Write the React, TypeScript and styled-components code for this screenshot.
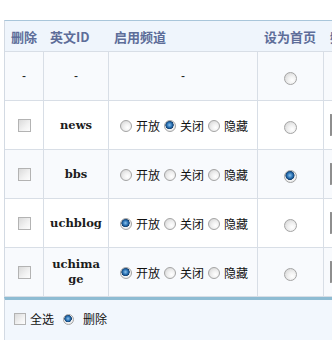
import React from "react"
import styled, { createGlobalStyle } from "styled-components"

const GlobalStyle = createGlobalStyle`
  html, body {
    margin: 0;
    padding: 0;
    overflow: hidden;
    background: #fff;
  }
  body {
    font-family: "Noto Sans CJK SC", "Liberation Sans", sans-serif;
    font-size: 12px;
    color: #222;
  }
`

const Sheet = styled.div`
  margin: 20px 0 0 4px;
  width: 480px;
`

const Grid = styled.div`
  display: grid;
  grid-template-columns: 39px 65px 149px 66px 140px;
  border-left: 1px solid #d3dae3;
  border-top: 1px solid #a9c6da;
`

const HeadCell = styled.div<{ $pad?: number }>`
  box-sizing: border-box;
  height: 31px;
  padding-left: ${(p) => p.$pad ?? 6}px;
  display: flex;
  align-items: center;
  background: #eff5fc;
  border-bottom: 1px solid #d8dee6;
  font-family: "Noto Sans CJK SC", sans-serif;
  font-weight: bold;
  font-size: 13px;
  color: #5d6d99;
  white-space: nowrap;
  overflow: hidden;
`

const Cell = styled.div<{ $alt: boolean; $align?: "center" | "left" }>`
  box-sizing: border-box;
  height: 49px;
  display: flex;
  align-items: center;
  justify-content: ${(p) => (p.$align === "left" ? "flex-start" : "center")};
  padding: 0 5px;
  background: ${(p) => (p.$alt ? "#f8fafd" : "#ffffff")};
  border-right: 1px solid #d8dee6;
  border-bottom: 1px solid #d8dee6;
  overflow: hidden;
`

const IdText = styled.span`
  display: inline-block;
  max-width: 52px;
  font-family: "DejaVu Serif", "Liberation Serif", serif;
  font-weight: bold;
  font-size: 11.5px;
  line-height: 15px;
  color: #1c1c1c;
  text-align: center;
  word-break: break-all;
`

const Dash = styled.span`
  font-family: "Liberation Sans", sans-serif;
  font-size: 12px;
  color: #222;
`

const Box = styled.span<{ $size: number }>`
  box-sizing: border-box;
  display: inline-block;
  width: ${(p) => p.$size}px;
  height: ${(p) => p.$size}px;
  border: 1px solid #b3b3b3;
  background: linear-gradient(135deg, #dadada 0%, #f2f2f2 60%, #fdfdfd 100%);
  flex: none;
`

const Radio = styled.span<{ $on: boolean; $size: number; $drop?: number }>`
  box-sizing: border-box;
  display: inline-block;
  flex: none;
  width: ${(p) => p.$size}px;
  height: ${(p) => p.$size}px;
  border-radius: 50%;
  border: 1px solid #a4a4a4;
  background: ${(p) =>
    p.$on
      ? "radial-gradient(circle at 45% 40%, #8fc4ec 0%, #2a72b5 30%, #123f6e 48%, #f4f4f4 54%, #dcdcdc 100%)"
      : "radial-gradient(circle at 65% 65%, #ffffff 0%, #f0f0f0 40%, #cfcfcf 100%)"};
  margin-top: ${(p) => p.$drop ?? 2}px;
`

const Options = styled.div`
  display: flex;
  align-items: center;
  gap: 4px;
  padding-left: 6px;
`

const Option = styled.label`
  display: flex;
  align-items: center;
  gap: 4px;
  white-space: nowrap;
  font-size: 12px;
  color: #111;
`

const NumBox = styled.span`
  box-sizing: border-box;
  display: inline-block;
  width: 100px;
  height: 22px;
  border: 1px solid #b8b8b8;
  border-left: 3px solid #8e8e8e;
  border-top: 2px solid #9a9a9a;
  background: #fff;
  margin-left: 1px;
`

const Footer = styled.div`
  box-sizing: border-box;
  height: 44px;
  display: flex;
  align-items: center;
  padding: 0 0 4px 9px;
  border-left: 1px solid #d3dae3;
  border-top: 3px solid #8ebcd3;
  background: #f2f7fd;
  font-size: 12px;
  color: #111;
`

const FootItem = styled.label<{ $gap: number }>`
  display: flex;
  align-items: center;
  gap: ${(p) => p.$gap}px;
  margin-right: 9px;
`

const channelLabels = [
  { key: "open", text: "开放" },
  { key: "close", text: "关闭" },
  { key: "hide", text: "隐藏" },
]

interface IChannelRow {
  id: string;
  channel?: string;
  home: boolean;
  fixed?: boolean;
}

const rows: IChannelRow[] = [
  { id: "-", home: false, fixed: true },
  { id: "news", channel: "close", home: false },
  { id: "bbs", home: true },
  { id: "uchblog", channel: "open", home: false },
  { id: "uchimage", channel: "open", home: false },
]

export default function App() {
  return (
    <Sheet>
      <GlobalStyle />
      <Grid>
        <HeadCell>删除</HeadCell>
        <HeadCell>英文ID</HeadCell>
        <HeadCell $pad={5}>启用频道</HeadCell>
        <HeadCell>设为首页</HeadCell>
        <HeadCell>频道名称</HeadCell>

        {rows.map((r, i) => {
          const alt = i % 2 === 0
          return (
            <React.Fragment key={r.id}>
              <Cell $alt={alt}>{r.fixed ? <Dash>-</Dash> : <Box $size={13} />}</Cell>
              <Cell $alt={alt}>{r.fixed ? <Dash>-</Dash> : <IdText>{r.id}</IdText>}</Cell>
              <Cell $alt={alt} $align={r.fixed ? "center" : "left"}>
                {r.fixed ? (
                  <Dash>-</Dash>
                ) : (
                  <Options>
                    {channelLabels.map((c) => (
                      <Option key={c.key}>
                        <Radio $on={r.channel === c.key} $size={12} />
                        {c.text}
                      </Option>
                    ))}
                  </Options>
                )}
              </Cell>
              <Cell $alt={alt}>
                <Radio $on={r.home} $size={13} $drop={5} />
              </Cell>
              <Cell $alt={alt} $align="left">{r.fixed ? null : <NumBox />}</Cell>
            </React.Fragment>
          )
        })}
      </Grid>
      <Footer>
        <FootItem $gap={4}>
          <Box $size={12} />
          全选
        </FootItem>
        <FootItem $gap={9}>
          <Radio $on={true} $size={11} />
          删除
        </FootItem>
      </Footer>
    </Sheet>
  )
}
